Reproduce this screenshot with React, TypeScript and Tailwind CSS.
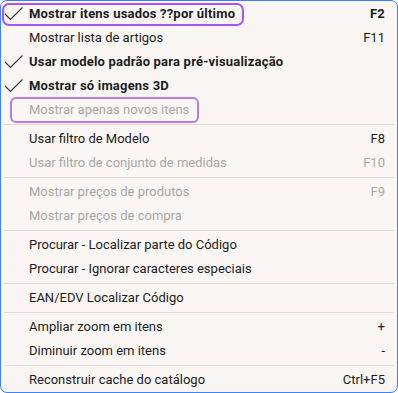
import React from "react";

type Item =
  | { sep: true }
  | { label: string; shortcut?: string; bold?: boolean; checked?: boolean; disabled?: boolean; ring?: "full" | "text" };

const items: Item[] = [
  { label: "Mostrar itens usados ??por último", shortcut: "F2", bold: true, checked: true, ring: "full" },
  { label: "Mostrar lista de artigos", shortcut: "F11" },
  { label: "Usar modelo padrão para pré-visualização", bold: true, checked: true },
  { label: "Mostrar só imagens 3D", bold: true, checked: true },
  { label: "Mostrar apenas novos itens", disabled: true, ring: "text" },
  { sep: true },
  { label: "Usar filtro de Modelo", shortcut: "F8" },
  { label: "Usar filtro de conjunto de medidas", shortcut: "F10", disabled: true },
  { sep: true },
  { label: "Mostrar preços de produtos", shortcut: "F9", disabled: true },
  { label: "Mostrar preços de compra", disabled: true },
  { sep: true },
  { label: "Procurar - Localizar parte do Código" },
  { label: "Procurar - Ignorar caracteres especiais" },
  { sep: true },
  { label: "EAN/EDV Localizar Código" },
  { sep: true },
  { label: "Ampliar zoom em itens", shortcut: "+" },
  { label: "Diminuir zoom em itens", shortcut: "-" },
  { sep: true },
  { label: "Reconstruir cache do catálogo", shortcut: "Ctrl+F5" },
];

function Check() {
  return (
    <svg width="20" height="15" viewBox="0 0 20 15" className="absolute left-[3px] top-1/2 -translate-y-1/2">
      <path d="M1 7.5 L6.5 13 L18.5 1" fill="none" stroke="#3a3a3a" strokeWidth="1.2" />
    </svg>
  );
}

export default function App() {
  return (
    <div
      className="w-[398px] h-[393px] bg-[#faf6f4] border border-[#3b82f6] rounded-[7px] overflow-hidden relative pt-[1px]"
      style={{ fontFamily: 'Roboto, "Noto Sans", sans-serif' }}
    >
      {items.map((it, i) => {
        if ("sep" in it) return <div key={i} className="h-[5px] flex items-center px-[3px]"><div className="h-px w-full bg-[#e2dad7]" /></div>;
        return (
          <div
            key={i}
            className={`relative h-[24px] flex items-center pl-[28px] pr-[12px] text-[13px] ${it.disabled ? "text-[#a9a6a5]" : "text-[#1c1c1c]"} ${it.bold ? "font-bold tracking-[0.2px]" : ""}`}
          >
            {it.checked && <Check />}
            {it.ring === "full" && (
              <div className="absolute left-[1px] top-[1px] w-[242px] h-[23px] border-2 border-[#a855f7] rounded-[7px]" />
            )}
            {it.ring === "text" && (
              <div className="absolute left-[9px] top-[-1px] w-[189px] h-[26px] border-2 border-[#b57be8] rounded-[6px]" />
            )}
            <span className="flex-1 whitespace-nowrap">{it.label}</span>
            {it.shortcut && <span className="whitespace-nowrap">{it.shortcut}</span>}
          </div>
        );
      })}
    </div>
  );
}
